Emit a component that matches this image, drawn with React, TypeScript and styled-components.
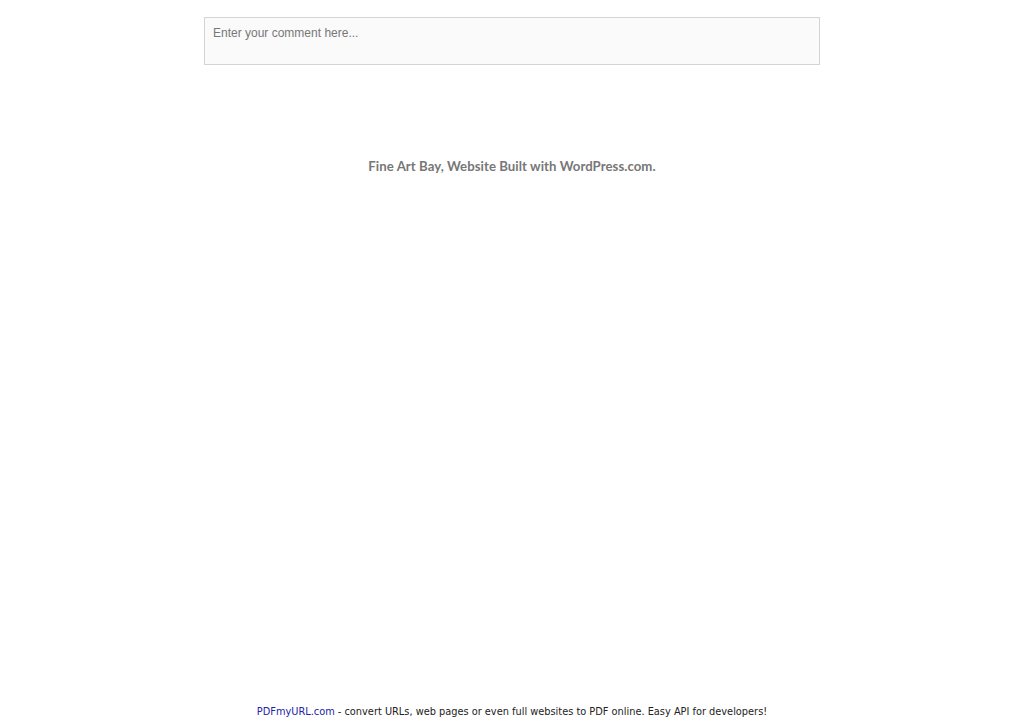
import React from "react";
import styled, { createGlobalStyle } from "styled-components";

const GlobalStyle = createGlobalStyle`
  html, body {
    margin: 0;
    padding: 0;
    background: #ffffff;
  }
`;

const Page = styled.div`
  width: 1024px;
  height: 723px;
  display: flex;
  flex-direction: column;
  align-items: center;
  box-sizing: border-box;
  padding-top: 17px;
`;

const CommentBox = styled.div`
  width: 616px;
  height: 48px;
  box-sizing: border-box;
  border: 1px solid #d4d4d4;
  background: #fafafa;
  padding: 8px 8px;
  font-family: "Liberation Sans", Arial, sans-serif;
  font-size: 12px;
  color: #777777;
`;

const SiteInfo = styled.div`
  margin-top: 92px;
  font-family: Lato, "Open Sans", sans-serif;
  font-weight: 700;
  font-size: 13.2px;
  letter-spacing: 0.05px;
  color: #777777;
  line-height: 18px;
`;

const Spacer = styled.div`
  flex: 1;
`;

const Banner = styled.div`
  font-family: "DejaVu Sans", Verdana, sans-serif;
  font-size: 9.8px;
  color: #222222;
  padding-bottom: 4px;
  line-height: 14px;
`;

const BannerLink = styled.span`
  color: #2222aa;
`;

const App: React.FC = () => {
  return (
    <>
      <GlobalStyle />
      <Page>
        <CommentBox>Enter your comment here...</CommentBox>
        <SiteInfo>Fine Art Bay, Website Built with WordPress.com.</SiteInfo>
        <Spacer />
        <Banner>
          <BannerLink>PDFmyURL.com</BannerLink> - convert URLs, web pages or even full websites to PDF online. Easy API for developers!
        </Banner>
      </Page>
    </>
  );
};

export default App;
